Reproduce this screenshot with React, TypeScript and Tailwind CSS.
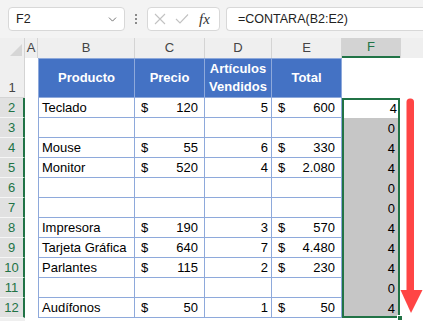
import { ChevronDown } from 'lucide-react';

/* ------------------------------------------------------------------ */
/*  Data                                                              */
/* ------------------------------------------------------------------ */

type Row = { n: number; prod?: string; price?: string; qty?: string; total?: string; count: string };

const ROWS: Row[] = [
    { n: 2, prod: 'Teclado', price: '120', qty: '5', total: '600', count: '4' },
    { n: 3, count: '0' },
    { n: 4, prod: 'Mouse', price: '55', qty: '6', total: '330', count: '4' },
    { n: 5, prod: 'Monitor', price: '520', qty: '4', total: '2.080', count: '4' },
    { n: 6, count: '0' },
    { n: 7, count: '0' },
    { n: 8, prod: 'Impresora', price: '190', qty: '3', total: '570', count: '4' },
    { n: 9, prod: 'Tarjeta Gráfica', price: '640', qty: '7', total: '4.480', count: '4' },
    { n: 10, prod: 'Parlantes', price: '115', qty: '2', total: '230', count: '4' },
    { n: 11, count: '0' },
    { n: 12, prod: 'Audífonos', price: '50', qty: '1', total: '50', count: '4' },
];

const FONT = { fontFamily: '"Liberation Sans", Arial, sans-serif' };

/* ------------------------------------------------------------------ */
/*  Pieces                                                            */
/* ------------------------------------------------------------------ */

function FormulaBar() {
    return (
        <div className="h-[38px] bg-[#f3f3f3] flex items-start pt-[7px] pl-[8px]">
            {/* Name box */}
            <div className="w-[117px] h-[24px] bg-white border border-[#d8d8d8] rounded-[4px] flex items-center justify-between pl-[7px] pr-[5px]">
                <span className="text-[12.5px] text-[#222]">F2</span>
                <ChevronDown size={13} strokeWidth={1.5} className="text-[#555]" />
            </div>
            {/* Dots */}
            <div className="w-[22px] h-[24px] flex flex-col items-center justify-center gap-[2px]">
                <span className="w-[2px] h-[2px] bg-[#8a8a8a]" />
                <span className="w-[2px] h-[2px] bg-[#8a8a8a]" />
                <span className="w-[2px] h-[2px] bg-[#8a8a8a]" />
            </div>
            {/* Cancel / enter / fx */}
            <div className="w-[73px] h-[24px] bg-white border border-[#d8d8d8] rounded-[4px] flex items-center pl-[6px]">
                <svg width="12" height="12" viewBox="0 0 12 12" className="mr-[9px]">
                    <path d="M1 1 L11 11 M11 1 L1 11" stroke="#c2c2c2" strokeWidth="1.1" fill="none" />
                </svg>
                <svg width="14" height="12" viewBox="0 0 14 12" className="mr-[10px]">
                    <path d="M1 6 L5 10 L13 1.5" stroke="#c2c2c2" strokeWidth="1.1" fill="none" />
                </svg>
                <span
                    className="text-[15px] italic text-[#333] leading-none"
                    style={{ fontFamily: '"Liberation Serif", "Times New Roman", serif' }}
                >
                    fx
                </span>
            </div>
            {/* Formula */}
            <div className="ml-[6px] flex-1 h-[24px] bg-white border border-r-0 border-[#d8d8d8] rounded-l-[4px] flex items-center pl-[11px]">
                <span className="text-[12.5px] text-[#222]">=CONTARA(B2:E2)</span>
            </div>
        </div>
    );
}

function ColumnHeaders() {
    const cols = [
        { l: 'A', w: 'w-[13px]' },
        { l: 'B', w: 'w-[97px]' },
        { l: 'C', w: 'w-[70px]' },
        { l: 'D', w: 'w-[67px]' },
        { l: 'E', w: 'w-[70px]' },
    ];
    return (
        <div className="h-[20px] flex bg-[#efefef] text-[13px] text-[#444]">
            <div className="w-[25px] h-full border-r border-[#d4d4d4] relative">
                <svg width="12" height="12" className="absolute right-[2px] bottom-[2px]">
                    <polygon points="12,0 12,12 0,12" fill="#d6d6d6" />
                </svg>
            </div>
            {cols.map((c) => (
                <div key={c.l} className={`${c.w} h-full border-r border-[#d4d4d4] flex items-center justify-center`}>
                    {c.l}
                </div>
            ))}
            <div className="w-[58px] h-full bg-[#d3d3d3] border-b-2 border-[#217346] text-[#217346] flex items-center justify-center">
                F
            </div>
            <div className="flex-1 h-full border-l border-[#d4d4d4]" />
        </div>
    );
}

function HeaderRow() {
    const cell = 'h-full bg-[#4472c4] border-r border-t border-b border-[#8ea9db] flex items-center justify-center text-white font-bold text-[13px] text-center';
    return (
        <div className="h-[40px] flex">
            <div className="w-[25px] h-full bg-[#efefef] border-r border-b border-[#d4d4d4] flex items-end justify-center text-[13px] text-[#444] leading-[18px]">
                1
            </div>
            <div className="w-[13px] h-full bg-white" />
            <div className={`w-[97px] border-l ${cell}`}>Producto</div>
            <div className={`w-[70px] ${cell}`}>Precio</div>
            <div className={`w-[67px] ${cell} leading-[18px]`}>
                Artículos
                <br />
                Vendidos
            </div>
            <div className={`w-[70px] ${cell}`}>Total</div>
            <div className="flex-1 h-full bg-white" />
        </div>
    );
}

function Money({ v }: { v?: string }) {
    if (!v) return null;
    return (
        <div className="w-full flex justify-between px-[6px]">
            <span>$</span>
            <span>{v}</span>
        </div>
    );
}

function DataRow({ r }: { r: Row }) {
    const cell = 'h-full border-r border-b border-[#8ea9db] flex items-end leading-[16px] pb-[1px]';
    return (
        <div className="h-[20px] flex">
            <div className="w-[25px] h-full bg-[#e1e1e1] border-r-2 border-r-[#217346] border-b border-b-[#f6f6f6] flex items-center justify-center text-[13px] text-[#217346]">
                {r.n}
            </div>
            <div className="w-[13px] h-full bg-white" />
            <div className={`w-[97px] border-l pl-[3px] ${cell}`}>{r.prod}</div>
            <div className={`w-[70px] ${cell}`}>
                <Money v={r.price} />
            </div>
            <div className={`w-[67px] justify-end pr-[3px] ${cell}`}>{r.qty}</div>
            <div className={`w-[70px] ${cell}`}>
                <Money v={r.total} />
            </div>
        </div>
    );
}

function RedArrow() {
    return (
        <svg width="23" height="220" viewBox="0 0 23 220">
            <rect x="6.5" y="0.5" width="7.5" height="196" rx="3.5" fill="#ff4545" />
            <polygon points="0.5,192 22.5,192 11,215" fill="#ff4545" />
        </svg>
    );
}

/* ------------------------------------------------------------------ */
/*  App                                                               */
/* ------------------------------------------------------------------ */

export default function App() {
    return (
        <div className="w-[423px] h-[321px] overflow-hidden bg-white text-black text-[13px]" style={FONT}>
            <FormulaBar />
            <ColumnHeaders />
            <HeaderRow />

            {/* Rows 2–12 */}
            <div className="flex">
                <div className="w-[342px]">
                    {ROWS.map((r) => (
                        <DataRow key={r.n} r={r} />
                    ))}
                </div>

                {/* Selected range F2:F12 */}
                <div className="w-[58px] relative outline-2 outline-[#217346] -outline-offset-2">
                    {ROWS.map((r, i) => (
                        <div
                            key={r.n}
                            className={`h-[20px] flex items-end justify-end pr-[3px] leading-[16px] pb-[1px] ${
                                i === 0 ? 'bg-white' : 'bg-[#c6c6c6] mr-[2px] pr-[1px]'
                            }`}
                        >
                            {r.count}
                        </div>
                    ))}
                    <div className="absolute right-[-3px] bottom-[-3px] w-[6px] h-[6px] bg-[#217346] border border-white" />
                </div>

                <div className="flex-1 pt-[0px]">
                    <RedArrow />
                </div>
            </div>
            <div className="h-[3px] flex">
                <div className="w-[25px] h-full bg-[#efefef]" />
            </div>
        </div>
    );
}
